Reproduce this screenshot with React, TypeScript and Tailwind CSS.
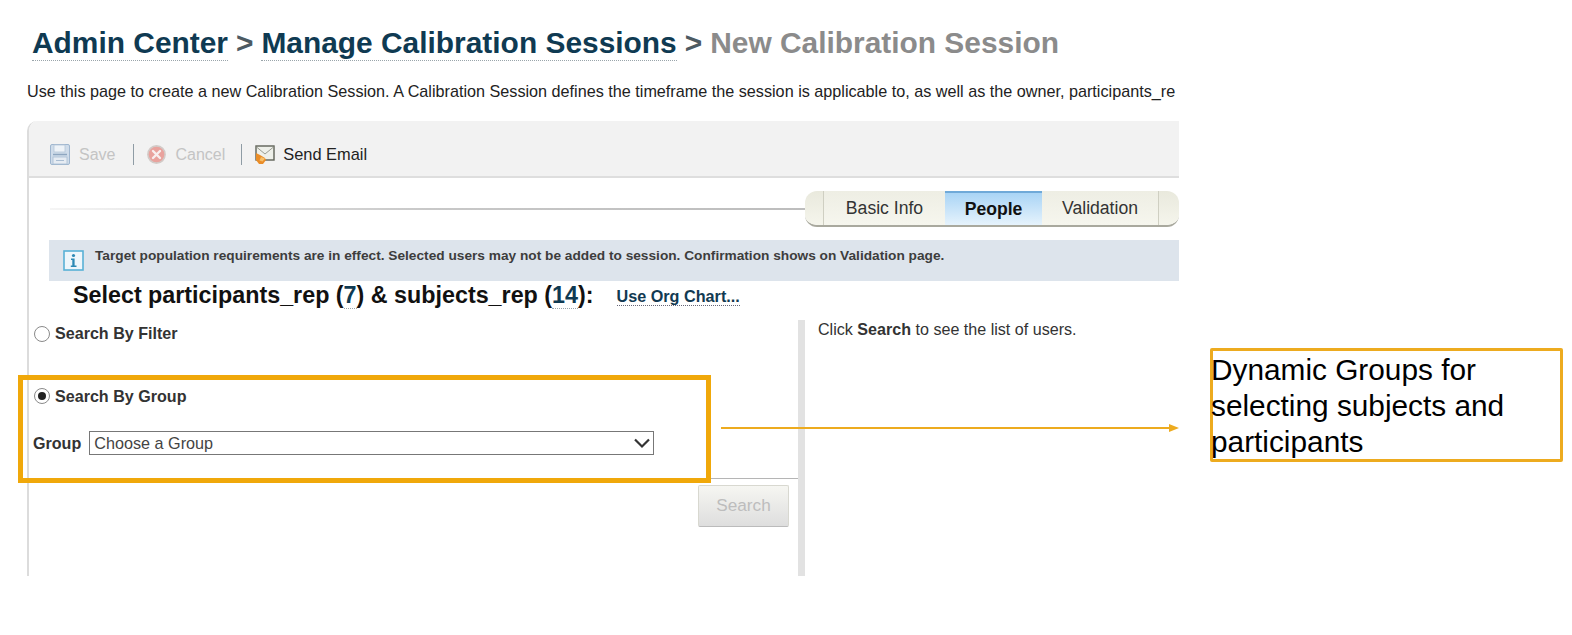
import React from "react";

function SaveIcon() {
  return (
    <svg width="20" height="21" viewBox="0 0 20 21" className="shrink-0">
      <rect x="0.5" y="0.5" width="19" height="20" rx="1.5" fill="#cfdcea" stroke="#9fb6cf" />
      <rect x="4" y="1" width="11" height="7" fill="#eef3f8" stroke="#b4c5d8" strokeWidth="0.8" />
      <rect x="3" y="13" width="14" height="7" fill="#e6ecf3" stroke="#a9bdd2" strokeWidth="0.8" />
      <path d="M3 10.5h14" stroke="#8ea6c0" strokeWidth="1.4" />
      <path d="M6 16.5h8" stroke="#a9bdd2" />
    </svg>
  );
}

function CancelIcon() {
  return (
    <svg width="19" height="19" viewBox="0 0 19 19" className="shrink-0">
      <circle cx="9.5" cy="9.5" r="8.6" fill="#e9a29d" stroke="#d2cac7" strokeWidth="1.6" />
      <path d="M6 6l7 7M13 6l-7 7" stroke="#f8eeee" strokeWidth="2.4" strokeLinecap="round" />
    </svg>
  );
}

function EmailIcon() {
  return (
    <svg width="20" height="21" viewBox="0 0 20 21" className="shrink-0">
      <rect x="1" y="2" width="18" height="14" fill="#eef0ea" stroke="#5f6258" strokeWidth="1.4" />
      <path d="M1.5 3l8.500 7 8.500-7" fill="none" stroke="#9b9d92" strokeWidth="1" />
      <path d="M1 9l4 2 5 3 1 2-3 4-4 0-3-4z" fill="#ea8d28" />
      <path d="M6 13l4 1.500-2.500 3-3-1z" fill="#f7c06a" />
    </svg>
  );
}

function InfoIcon() {
  return (
    <svg width="21" height="21" viewBox="0 0 21 21" className="shrink-0">
      <rect x="1" y="1" width="19" height="19" fill="#eef6fb" stroke="#58b1d6" strokeWidth="1.6" />
      <circle cx="10.5" cy="5.5" r="1.6" fill="#2c89b5" />
      <path d="M8 8.500h3.600v7H13.500v1.500H7.800v-1.500h1.500v-5.500H8z" fill="#2c89b5" />
    </svg>
  );
}

function Radio({ checked }: { checked?: boolean }) {
  return (
    <span className="flex h-[16px] w-[16px] shrink-0 items-center justify-center rounded-full border border-[#8a8a8a] bg-white">
      {checked && <span className="h-[8px] w-[8px] rounded-full bg-[#222]" />}
    </span>
  );
}

function Crumb({ children }: { children: React.ReactNode }) {
  return <span className="border-b border-dotted border-[#9aa5ab] text-[#0f3a52]">{children}</span>;
}

export default function App() {
  return (
    <div className="relative flex h-[635px] w-[1572px] overflow-hidden bg-white font-['Liberation_Sans',Arial,sans-serif] text-[#222]">
      <div className="h-[635px] w-[1179px] shrink-0 overflow-hidden">
        <h1 className="ml-[32px] mt-[26px] flex h-[34px] items-center whitespace-nowrap text-[29.9px] font-bold leading-[34px] text-[#4d5a62]">
          <Crumb>Admin Center</Crumb>
          <span className="mx-[8px]">&gt;</span>
          <Crumb>Manage Calibration Sessions</Crumb>
          <span className="mx-[8px]">&gt;</span>
          <span className="text-[#8b8b8b]">New Calibration Session</span>
        </h1>

        <p className="ml-[27px] mt-[21px] h-[20px] whitespace-nowrap text-[16.2px] leading-[20px] text-[#222]">
          Use this page to create a new Calibration Session. A Calibration Session defines the timeframe the session is applicable to, as well as the owner, participants_re
        </p>

        <div className="ml-[27px] mt-[20px] h-[455px] w-[1152px] overflow-hidden rounded-tl-[10px] border-l-2 border-[#dcdcdc]">
          <div className="flex h-[57px] items-center border-b-2 border-[#dedede] bg-[#f2f2f2] pl-[21px] pt-[12px] text-[16px]">
            <SaveIcon />
            <span className="ml-[9px] text-[#c4c4c4]">Save</span>
            <span className="ml-[18px] h-[21px] w-px bg-[#8f9ca5]" />
            <span className="ml-[13px]"><CancelIcon /></span>
            <span className="ml-[9px] text-[#c4c4c4]">Cancel</span>
            <span className="ml-[16px] h-[21px] w-px bg-[#8f9ca5]" />
            <span className="ml-[13px]"><EmailIcon /></span>
            <span className="ml-[8px] text-[16.4px] text-[#222]">Send Email</span>
          </div>

          <div className="mt-[13px] flex h-[36px] items-center">
            <div className="ml-[21px] h-[2px] flex-1 bg-gradient-to-r from-[#f5f5f5] via-[#c8c8c8] to-[#bdbdbd]" />
            <div className="flex h-[36px] w-[374px] overflow-hidden rounded-[12px] border-b-2 border-[#a9a99e] text-[17.6px] text-[#333]">
              <span className="w-[19px] border-r border-[#cfcfc2] bg-gradient-to-b from-[#e9e9dd] to-[#f5f5ec]" />
              <span className="flex w-[121px] items-center justify-center bg-gradient-to-b from-[#eeeee4] to-[#f6f6ee]">Basic Info</span>
              <span className="flex w-[97px] items-center justify-center border-t-2 border-[#6fa9d8] bg-gradient-to-b from-[#a9d4f5] to-[#e6f3fc] font-bold text-[#111]">People</span>
              <span className="flex w-[116px] items-center justify-center bg-gradient-to-b from-[#eeeee4] to-[#f6f6ee]">Validation</span>
              <span className="flex-1 border-l border-[#cfcfc2] bg-gradient-to-b from-[#e9e9dd] to-[#f5f5ec]" />
            </div>
          </div>

          <div className="ml-[20px] mt-[13px] flex h-[41px] items-start bg-[#dde4ec] pl-[14px] pt-[10px]">
            <InfoIcon />
            <span className="ml-[11px] mt-[-2px] whitespace-nowrap text-[13.7px] font-bold leading-[16px] text-[#3d3d3d]">
              Target population requirements are in effect. Selected users may not be added to session. Confirmation shows on Validation page.
            </span>
          </div>

          <div className="flex h-[39px] items-center pb-[11px] pl-[44px]">
            <span className="whitespace-nowrap text-[23.3px] font-bold leading-[26px] text-[#111]">
              Select participants_rep (<span className="border-b border-dotted border-[#9aa5ab] text-[#0f3a52]">7</span>) &amp; subjects_rep (<span className="border-b border-dotted border-[#9aa5ab] text-[#0f3a52]">14</span>):
            </span>
            <span className="ml-[23px] mt-[4px] whitespace-nowrap border-b border-dotted border-[#667] text-[16.2px] font-bold leading-[17px] text-[#123a52]">
              Use Org Chart...
            </span>
          </div>

          <div className="flex h-[256px]">
            <div className="w-[769px] shrink-0">
              <div className="flex h-[26px] items-center pl-[5px] pt-[1px]">
                <Radio />
                <span className="ml-[5px] text-[16.1px] font-bold text-[#333]">Search By Filter</span>
              </div>
              <div className="mt-[37px] flex h-[26px] items-center pl-[5px]">
                <Radio checked />
                <span className="ml-[5px] text-[16.1px] font-bold text-[#333]">Search By Group</span>
              </div>
              <div className="mt-[22px] flex h-[24px] items-center pl-[4px]">
                <span className="text-[16.1px] font-bold text-[#333]">Group</span>
                <div className="ml-[8px] flex h-[24px] w-[565px] items-center justify-between border border-[#777] bg-white pl-[4px] pr-[2px] text-[16.2px] text-[#444]">
                  <span>Choose a Group</span>
                  <svg width="18" height="12" viewBox="0 0 18 12">
                    <path d="M2 2.500l7 7 7-7" fill="none" stroke="#333" strokeWidth="2.2" />
                  </svg>
                </div>
              </div>
              <div className="mt-[23px] h-px bg-[#b5b5b5]" />
              <div className="mr-[9px] mt-[6px] flex justify-end">
                <span className="flex h-[42px] w-[91px] items-center justify-center rounded-[2px] border border-[#d8d8d0] border-b-[#bbb] bg-gradient-to-b from-[#f6f6f2] to-[#dedede] text-[17.2px] text-[#bdbdbd]">
                  Search
                </span>
              </div>
            </div>
            <div className="w-[7px] shrink-0 bg-[#e2e2e2]" />
            <p className="ml-[13px] whitespace-nowrap text-[16.1px] leading-[18px] text-[#333]">
              Click <b>Search</b> to see the list of users.
            </p>
          </div>
        </div>
      </div>

      <div className="ml-[31px] mt-[348px] h-[114px] w-[353px] shrink-0 rounded-[2px] border-[3px] border-[#edab1f] text-[29.8px] leading-[36px] text-black">
        <p className="ml-[-2px] mt-[1px]">Dynamic Groups for selecting subjects and participants</p>
      </div>

      {/* Annotations over the page */}
      <div className="absolute left-[18px] top-[375px] h-[108px] w-[693px] border-[5px] border-[#f0a80a]" />
      <svg className="absolute left-[721px] top-[421px]" width="460" height="14" viewBox="0 0 460 14">
        <path d="M0 7h450" stroke="#edab1f" strokeWidth="2" />
        <path d="M448 3l10 4-10 4z" fill="#edab1f" />
      </svg>
    </div>
  );
}
